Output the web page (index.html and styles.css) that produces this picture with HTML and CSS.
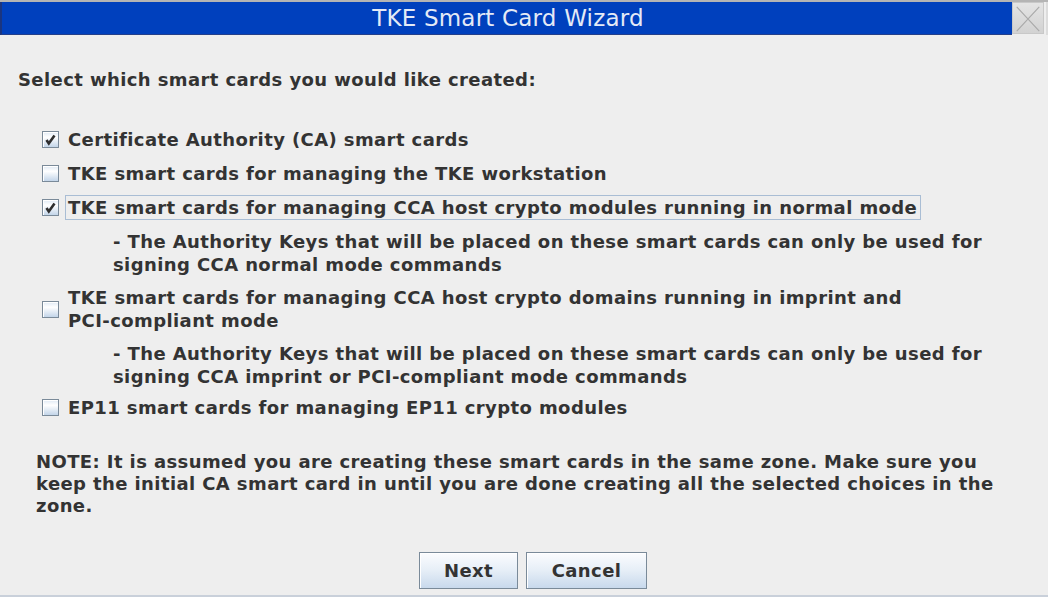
FILE: index.html
```html
<!DOCTYPE html>
<html>
<head>
<meta charset="utf-8">
<title>TKE Smart Card Wizard</title>
<link rel="stylesheet" href="styles.css">
</head>
<body>
<div class="window">
  <div class="titlebar">
    <div class="title">TKE Smart Card Wizard</div>
    <div class="close">
      <svg width="32" height="32" viewBox="0 0 32 32"><path d="M4 3 L28 29 M28 3 L4 29" stroke="#a9a9a9" stroke-width="1.2" fill="none"/></svg>
    </div>
    <div class="edge"></div>
  </div>
  <div class="content">
    <p class="prompt">Select which smart cards you would like created:</p>
    <div class="options">
      <div class="option">
        <span class="box"><svg width="15" height="15" viewBox="0 0 15 15"><path d="M3.5 8 L5.8 11.5 L11.5 3.5" stroke="#2e2e2e" stroke-width="2.6" fill="none"/></svg></span>
        <span class="label">Certificate Authority (CA) smart cards</span>
      </div>
      <div class="option">
        <span class="box"></span>
        <span class="label">TKE smart cards for managing the TKE workstation</span>
      </div>
      <div class="option">
        <span class="box"><svg width="15" height="15" viewBox="0 0 15 15"><path d="M3.5 8 L5.8 11.5 L11.5 3.5" stroke="#2e2e2e" stroke-width="2.6" fill="none"/></svg></span>
        <span class="label focused">TKE smart cards for managing CCA host crypto modules running in normal mode</span>
      </div>
      <p class="sub">- The Authority Keys that will be placed on these smart cards can only be used for<br>signing CCA normal mode commands</p>
      <div class="option">
        <span class="box"></span>
        <span class="label">TKE smart cards for managing CCA host crypto domains running in imprint and<br>PCI-compliant mode</span>
      </div>
      <p class="sub">- The Authority Keys that will be placed on these smart cards can only be used for<br>signing CCA imprint or PCI-compliant mode commands</p>
      <div class="option last">
        <span class="box"></span>
        <span class="label">EP11 smart cards for managing EP11 crypto modules</span>
      </div>
    </div>
    <p class="note">NOTE: It is assumed you are creating these smart cards in the same zone. Make sure you<br>keep the initial CA smart card in until you are done creating all the selected choices in the<br>zone.</p>
    <div class="buttons">
      <button class="btn btn-next">Next</button>
      <button class="btn btn-cancel">Cancel</button>
    </div>
  </div>
</div>
</body>
</html>
```
FILE: styles.css
```css
* { box-sizing: border-box; }
html, body {
  margin: 0;
  padding: 0;
  background: #eeeeee;
}
.window {
  width: 1048px;
  height: 597px;
  background: #eeeeee;
  border-top: 2px solid #b4b4b4;
  border-bottom: 2px solid #c9d0da;
  display: flex;
  flex-direction: column;
  font-family: "DejaVu Sans", sans-serif;
  color: #333333;
  overflow: hidden;
}
.titlebar {
  display: flex;
  height: 33px;
}
.title {
  flex: 1;
  background: #0040bd;
  border-left: 2px solid #1a3580;
  border-bottom: 1px solid #243f8a;
  color: #e4eaf6;
  font-size: 23px;
  letter-spacing: 0.2px;
  line-height: 32px;
  text-align: center;
  padding-left: 2px;
}
.close {
  width: 32px;
  height: 32px;
  background: linear-gradient(#e4e4e4, #d2d2d2);
  border: 1px solid #c8c8c8;
  display: flex;
}
.edge {
  width: 4px;
  border-right: 2px solid #dcdcdc;
}
.content {
  flex: 1;
  display: flex;
  flex-direction: column;
  padding: 0 0 0 18px;
  font-size: 18px;
  font-weight: bold;
  letter-spacing: 0.4px;
}
.prompt {
  margin: 33px 0 0 0;
  line-height: 23px;
}
.options {
  margin-top: 36px;
  padding-left: 24px;
  display: flex;
  flex-direction: column;
  gap: 9px;
}
.option {
  display: flex;
  align-items: center;
  gap: 6px;
}
.option.last {
  margin-top: -2px;
}
.box {
  width: 17px;
  height: 17px;
  flex: none;
  border: 1px solid #7a8a99;
  background: linear-gradient(#dfe9f4, #ffffff 35%, #c3d5e9);
  box-shadow: inset 1px 1px 0 #ffffff;
  display: flex;
  align-items: center;
  justify-content: center;
}
.label {
  line-height: 23px;
  padding: 0 3px 0 2px;
  border: 1px solid transparent;
}
.label.focused {
  border-color: #a9bdd4;
}
.sub {
  margin: 0 0 0 71px;
  line-height: 23px;
}
.sub:first-of-type {
  padding-top: 1px;
}
.note {
  margin: 31px 0 0 18px;
  line-height: 22px;
}
.buttons {
  margin-top: 35px;
  display: flex;
  justify-content: center;
  gap: 8px;
}
.btn {
  height: 37px;
  border: 1px solid #7a8a99;
  background: linear-gradient(#fbfcfe, #e6eef7 50%, #c8d9ec);
  box-shadow: inset 1px 1px 0 #ffffff;
  font-family: "DejaVu Sans", sans-serif;
  font-weight: bold;
  font-size: 18px;
  letter-spacing: 0.4px;
  color: #333333;
  padding: 0;
}
.btn-next { width: 99px; }
.btn-cancel { width: 121px; }
```
